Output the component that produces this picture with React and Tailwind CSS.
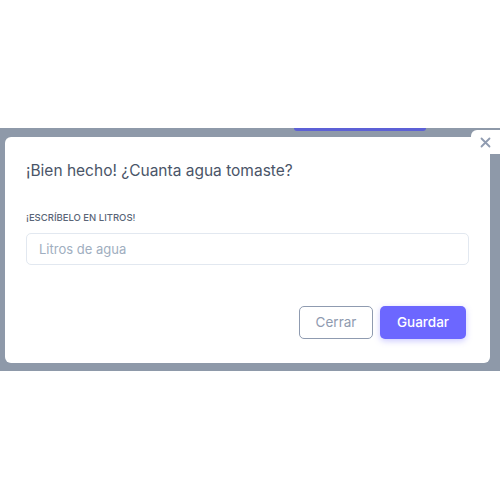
export default function App() {
  return (
    <div className="w-[500px] h-[500px] bg-white overflow-hidden" style={{ fontFamily: 'Inter, "Liberation Sans", sans-serif' }}>
      <div className="h-[128px]" />
      <div className="relative h-[243px] bg-[#8e99a9] pt-[9px] pl-[5px] pr-[10px]">
        <div className="absolute left-[294px] top-0 w-[132px] h-[3px] bg-[#5c60d6] rounded-b-sm" />
        <div className="bg-white rounded-[6px] h-[226px] w-[485px] px-[21px] pt-[24px]">
          <h2 className="text-[15.5px] leading-[20px] text-[#4a5568] font-normal">¡Bien hecho! ¿Cuanta agua tomaste?</h2>
          <div className="mt-[31px] text-[9.5px] leading-[12px] font-medium text-[#5a6577] uppercase">¡Escríbelo en litros!</div>
          <input
            className="mt-[9px] block w-[443px] h-[32px] border border-[#e2e8f0] rounded-[5px] px-[12px] text-[13px] text-[#4a5568] placeholder:text-[#a0aec0] outline-none"
            placeholder="Litros de agua"
          />
          <div className="mt-[41px] flex justify-end gap-[7px] pr-[3px]">
            <button className="w-[74px] h-[33px] rounded-[5px] border border-[#8f9bb0] text-[13.5px] text-[#8f9bb0] bg-white">Cerrar</button>
            <button className="w-[86px] h-[33px] rounded-[5px] bg-[#6c67ff] text-[13.5px] font-medium text-white shadow-[0_2px_6px_rgba(108,103,255,0.35)]">Guardar</button>
          </div>
        </div>
        <button className="absolute right-0 top-[2px] w-[29px] h-[24px] bg-white rounded-bl-[6px] rounded-tl-[6px] flex items-center justify-center text-[#8f9bb0]">
          <svg width="11" height="11" viewBox="0 0 11 11" fill="none" stroke="currentColor" strokeWidth="1.8" strokeLinecap="round">
            <path d="M1.5 1.5 L9.5 9.5 M9.5 1.5 L1.5 9.5" />
          </svg>
        </button>
      </div>
    </div>
  );
}
